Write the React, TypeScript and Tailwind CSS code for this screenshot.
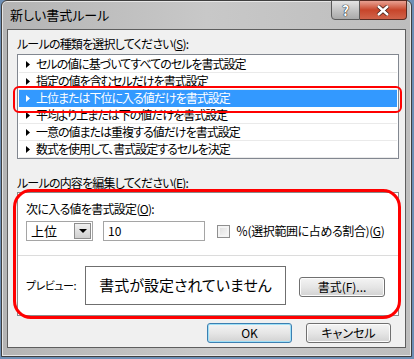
const rules = [
  "セルの値に基づいてすべてのセルを書式設定",
  "指定の値を含むセルだけを書式設定",
  "上位または下位に入る値だけを書式設定",
  "平均より上または下の値だけを書式設定",
  "一意の値または重複する値だけを書式設定",
  "数式を使用して、書式設定するセルを決定",
]

const font = "font-['Noto_Sans_CJK_JP',sans-serif] [font-feature-settings:'palt']"

function Btn({ label, focused, className }: { label: string; focused?: boolean; className?: string }) {
  return (
    <div
      className={`h-[20px] rounded-[3px] border flex items-center justify-center text-[12px] leading-none text-black bg-gradient-to-b from-[#f4f4f4] via-[#e6e6e6] to-[#d2d2d2] ${
        focused ? "border-[#3c7fb1] shadow-[inset_0_0_0_1px_#9fe0f7]" : "border-[#707070] shadow-[inset_0_0_0_1px_#fcfcfc]"
      } ${className ?? ""}`}
    >
      {label}
    </div>
  )
}

function Arrow({ white }: { white?: boolean }) {
  return (
    <svg width="4" height="7" viewBox="0 0 4 7" className="shrink-0">
      <path d="M0 0 L4 3.5 L0 7 Z" fill={white ? "#fff" : "#000"} />
    </svg>
  )
}

export default function App() {
  return (
    <div className={`w-[414px] h-[359px] bg-[#6d8fb5] overflow-hidden ${font}`}>
      <div className="ml-[1px] w-[411px] h-[357px] rounded-t-[6px] border border-[#3f3f3f] bg-gradient-to-r from-[#b4b4b4] via-[#c8c8c8] to-[#bdbdbd] flex flex-col px-[5px] pb-[8px] shadow-[inset_0_0_0_1px_#e6e6e6]">
        {/* title bar */}
        <div className="h-[28px] flex items-start justify-between">
          <div className="pt-[5px] pl-[3px] text-[13px] leading-[18px] text-black">新しい書式ルール</div>
          <div className="flex mr-[-1px] mt-[-1px]">
            <div className="w-[29px] h-[20px] rounded-bl-[4px] border border-[#5a5a5a] bg-gradient-to-b from-[#e4e4e4] via-[#c4c4c4] to-[#a9a9a9] flex items-center justify-center text-white font-bold text-[14px] [text-shadow:0_0_1px_#000,0_0_1px_#000]">
              ?
            </div>
            <div className="w-[47px] h-[20px] rounded-br-[4px] border border-l-0 border-[#5a2b22] bg-gradient-to-b from-[#e8a192] via-[#c7452a] to-[#d0634a] flex items-center justify-center">
              <svg width="14" height="11" viewBox="0 0 14 11">
                <path d="M2 1 L12 10 M12 1 L2 10" stroke="#3d1b14" strokeWidth="4" />
                <path d="M2 1 L12 10 M12 1 L2 10" stroke="#fff" strokeWidth="2.4" />
              </svg>
            </div>
          </div>
        </div>

        {/* client area */}
        <div className="flex-1 border border-[#5e5e5e] bg-[#f0f0f0] flex flex-col pl-[9px] pr-[6px] text-black">
          <div className="mt-[6px] text-[12px] leading-[16px] tracking-[-0.8px]">
            ルールの種類を選択してください(<span className="underline">S</span>):
          </div>
          {/* rule list */}
          <div className="relative mt-[2px] h-[105px] border border-[#828790] bg-white p-[1px]">
            {rules.map((r, i) => {
              const sel = i === 2
              return (
                <div
                  key={r}
                  className={`h-[17px] flex items-center gap-[6px] pl-[7px] text-[12px] leading-none tracking-[-1px] border-b ${
                    sel ? "bg-[#3399ff] text-white border-[#3399ff]" : "border-[#eaeaea]"
                  }`}
                >
                  <Arrow white={sel} />
                  <span>{r}</span>
                </div>
              )
            })}
            <div className="absolute left-[-5px] top-[31px] w-[389px] h-[27px] rounded-[6px] border-2 border-[#ff0000]" />
          </div>

          <div className="mt-[16px] text-[12px] leading-[16px] tracking-[-0.8px]">
            ルールの内容を編集してください(<span className="underline">E</span>):
          </div>
          {/* edit panel */}
          <div className="relative mt-[1px] h-[124px] border border-[#8a8a8a] bg-white flex flex-col">
            <div className="h-[63px] border-b border-[#dcdcdc] pl-[8px] pt-[8px] flex flex-col">
              <div className="text-[12px] leading-[16px] tracking-[-0.7px]">
                次に入る値を書式設定(<span className="underline">O</span>):
              </div>
              <div className="mt-[4px] flex items-center">
                <div className="w-[67px] h-[20px] border border-[#a5a5a5] flex items-center justify-between pl-[4px] pr-[1px] text-[13px]">
                  <span>上位</span>
                  <div className="w-[17px] h-[16px] border border-[#8d8d8d] bg-gradient-to-b from-[#f0f0f0] to-[#cfcfcf] flex items-center justify-center">
                    <svg width="8" height="4" viewBox="0 0 8 4">
                      <path d="M0 0 H8 L4 4 Z" fill="#000" />
                    </svg>
                  </div>
                </div>
                <div className="ml-[10px] w-[102px] h-[20px] border border-[#a5a5a5] pl-[4px] flex items-center text-[12px]">10</div>
                <div className="ml-[12px] w-[13px] h-[13px] border border-[#8f8f8f] bg-gradient-to-br from-[#dcdcdc] to-[#fafafa] shadow-[inset_0_0_0_2px_#f4f4f4]" />
                <div className="ml-[6px] text-[12px] leading-none tracking-[-0.4px]">
                  ％(選択範囲に占める割合)(<span className="underline">G</span>)
                </div>
              </div>
            </div>
            <div className="flex-1 flex items-center pl-[8px]">
              <div className="w-[59px] text-[11px] leading-none tracking-[-0.5px]">プレビュー:</div>
              <div className="w-[201px] h-[39px] border border-[#6f6f6f] flex items-center justify-center text-[15px]">
                書式が設定されていません
              </div>
              <Btn label="書式(F)..." className="ml-[13px] w-[86px] mb-[-2px]" />
            </div>
            <div className="absolute left-[-5px] top-[-4px] w-[388px] h-[130px] rounded-[18px] border-[3px] border-[#ff0000]" />
          </div>

          {/* bottom buttons */}
          <div className="mt-[7px] flex justify-end gap-[14px] pr-[8px]">
            <Btn label="OK" focused className="w-[85px]" />
            <Btn label="キャンセル" className="w-[85px]" />
          </div>
        </div>
      </div>
    </div>
  )
}
